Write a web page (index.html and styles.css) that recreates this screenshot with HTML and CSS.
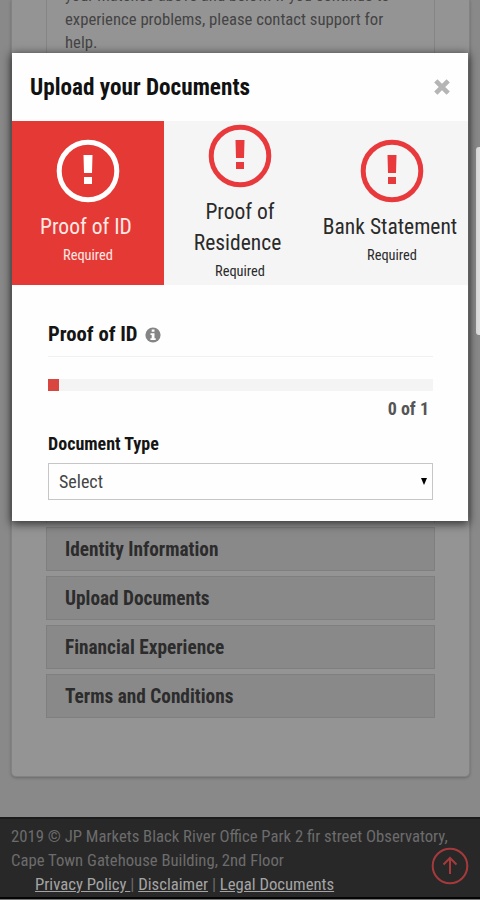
FILE: index.html
```html
<!DOCTYPE html>
<html lang="en">
<head>
    <meta charset="UTF-8">
    <meta name="viewport" content="width=device-width, initial-scale=1.0">
    <title>Upload your Documents</title>
    <link rel="stylesheet" href="styles.css">
</head>
<body>
    <div class="page">
        <main class="card">
            <div class="notice">
                <p>your matches above and below. If you continue to<br>experience problems, please contact support for<br>help.</p>
            </div>
            <div class="steps">
                <div class="step"><span>Identity Information</span></div>
                <div class="step"><span>Upload Documents</span></div>
                <div class="step"><span>Financial Experience</span></div>
                <div class="step"><span>Terms and Conditions</span></div>
            </div>
        </main>
        <footer class="footer">
            <p class="address">2019 © JP Markets Black River Office Park 2 fir street Observatory,<br>Cape Town Gatehouse Building, 2nd Floor</p>
            <p class="links"><a href="#">Privacy Policy </a>| <a href="#">Disclaimer</a> | <a href="#">Legal Documents</a></p>
        </footer>
    </div>

    <a class="to-top" href="#">
        <svg width="38" height="38" viewBox="0 0 38 38" fill="none" stroke="#a63a3b" stroke-width="2">
            <circle cx="19" cy="19" r="17.3"/>
            <path d="M19 27V11.5M12.5 17.5L19 11l6.500 6.500"/>
        </svg>
    </a>
    <div class="scrollbar"></div>

    <div class="modal">
        <div class="modal-header">
            <h2>Upload your Documents</h2>
            <svg class="close" width="16" height="16" viewBox="0 0 16 16" stroke="#b5b5b5" stroke-width="4.600">
                <path d="M1.800 1.800L14.200 14.200M14.200 1.800L1.800 14.200"/>
            </svg>
        </div>
        <div class="tabs">
            <div class="tab active">
                <svg class="alert" viewBox="0 0 64 64"><circle cx="32" cy="32" r="28.800"/><path d="M27.500 16h9l-.5 18h-8zM28 38h8v7h-8z"/></svg>
                <span class="tab-title">Proof of ID</span>
                <span class="tab-note">Required</span>
            </div>
            <div class="tab">
                <svg class="alert" viewBox="0 0 64 64"><circle cx="32" cy="32" r="28.800"/><path d="M27.500 16h9l-.5 18h-8zM28 38h8v7h-8z"/></svg>
                <span class="tab-title">Proof of<br>Residence&nbsp;</span>
                <span class="tab-note">Required</span>
            </div>
            <div class="tab">
                <svg class="alert" viewBox="0 0 64 64"><circle cx="32" cy="32" r="28.800"/><path d="M27.500 16h9l-.5 18h-8zM28 38h8v7h-8z"/></svg>
                <span class="tab-title">Bank Statement</span>
                <span class="tab-note">Required</span>
            </div>
        </div>
        <div class="modal-body">
            <h3>Proof of ID
                <svg class="info" width="16" height="16" viewBox="0 0 16 16"><circle cx="8" cy="8" r="7.600" fill="#858585"/><path d="M6.700 2.500h2.800v2.300H6.700zM5.500 6.300h4v5h1.200V13H5.400v-1.700h1.300V8H5.500z" fill="#fff"/></svg>
            </h3>
            <div class="progress"><div class="progress-bar"></div></div>
            <div class="count">0 of 1</div>
            <label>Document Type</label>
            <div class="select"><span>Select</span><i class="caret"></i></div>
        </div>
    </div>
</body>
</html>
```
FILE: styles.css
```css
* {
    box-sizing: border-box;
    margin: 0;
    padding: 0;
}

body {
    font-family: 'Roboto Condensed', 'Roboto', sans-serif;
    font-stretch: 75%;
    background: #898989;
    height: 900px;
    overflow: hidden;
}

.page {
    height: 900px;
    display: flex;
    flex-direction: column;
    border-bottom: 1px solid #777;
}

.card {
    flex: none;
    height: 777px;
    margin: 0 10px 40px 11px;
    padding: 0 34px;
    background: #949494;
    border: 1px solid #828282;
    border-top: none;
    border-radius: 0 0 5px 5px;
    box-shadow: 0 1px 3px rgba(0, 0, 0, 0.25);
}

.notice {
    height: 523px;
    padding-left: 18px;
    border: 1px solid #858585;
    border-width: 0 1px;
    color: #444;
    font-size: 16.7px;
    line-height: 23.5px;
}

.notice p {
    margin-top: -16px;
    display: inline-block;
}

.steps {
    display: flex;
    flex-direction: column;
    gap: 5px;
    margin-top: 4px;
}

.step {
    height: 44px;
    padding-left: 18px;
    display: flex;
    align-items: center;
    background: #898989;
    border: 1px solid #7f7f7f;
    color: #2c2c2c;
    font-size: 19.3px;
    font-weight: 700;
}

.footer {
    flex: 1;
    padding: 6px 11px 0;
    background: #282828;
    border-top: 2px solid #1c1c1c;
    border-bottom: 2px solid #050505;
    color: #6c6c6c;
    font-size: 16.7px;
    line-height: 24px;
    white-space: nowrap;
}

.links {
    padding-left: 24px;
}

.links a {
    color: #a4a4a4;
}

.to-top {
    position: absolute;
    left: 431px;
    top: 847px;
}

.scrollbar {
    position: absolute;
    right: 0;
    top: 147px;
    width: 4px;
    height: 188px;
    background: #dedede;
    border-radius: 3px 0 0 3px;
}

.modal {
    position: absolute;
    left: 12px;
    top: 53px;
    width: 456px;
    height: 468px;
    background: #fefefe;
    box-shadow: 0 2px 9px 1px rgba(0, 0, 0, 0.65);
}

.modal-header {
    height: 68px;
    padding: 0 18px 1px 18px;
    display: flex;
    align-items: center;
    justify-content: space-between;
}

.modal-header h2 {
    color: #111;
    font-size: 23.2px;
}

.tabs {
    display: grid;
    grid-template-columns: 152px 152px 152px;
    height: 164px;
    background: #f5f5f5;
}

.tab {
    display: flex;
    flex-direction: column;
    align-items: center;
    justify-content: center;
    padding-top: 2px;
    color: #2a2a2a;
    text-align: center;
}

.tab.active {
    background: #e53935;
    color: #ffe9e5;
}

.alert {
    width: 64px;
    height: 64px;
    fill: #e8393d;
}

.alert circle {
    fill: none;
    stroke: #e8393d;
    stroke-width: 5;
}

.active .alert {
    fill: #fff;
}

.active .alert circle {
    stroke: #fff;
}

.tab-title {
    margin: 8px 4px 0 0;
    font-size: 21.5px;
    line-height: 31px;
    white-space: nowrap;
}

.tab:nth-child(2) .tab-title {
    margin-right: 0;
}

.tab-note {
    font-size: 14.4px;
    line-height: 27px;
}

.modal-body {
    padding: 28px 35px 0 36px;
}

h3 {
    height: 44px;
    padding-top: 8px;
    border-bottom: 1px solid #f0f0f0;
    color: #151515;
    font-size: 20.7px;
    line-height: 26px;
}

.info {
    margin-left: 3px;
    vertical-align: -2px;
}

.progress {
    height: 12px;
    margin-top: 22px;
    background: #f4f4f4;
}

.progress-bar {
    width: 11px;
    height: 12px;
    background: #d9463f;
}

.count {
    padding: 6px 4px 0 0;
    color: #555;
    font-size: 18px;
    font-weight: 700;
    line-height: 24px;
    text-align: right;
}

label {
    display: block;
    margin: 11px 0 7px;
    color: #151515;
    font-size: 18px;
    font-weight: 700;
    line-height: 24px;
}

.select {
    height: 37px;
    padding: 0 5px 0 10px;
    display: flex;
    align-items: center;
    justify-content: space-between;
    border: 1px solid #c6c6c6;
    color: #444;
    font-size: 18px;
}

.caret {
    border: 3.5px solid transparent;
    border-top: 7px solid #000;
    border-bottom: none;
}
```
